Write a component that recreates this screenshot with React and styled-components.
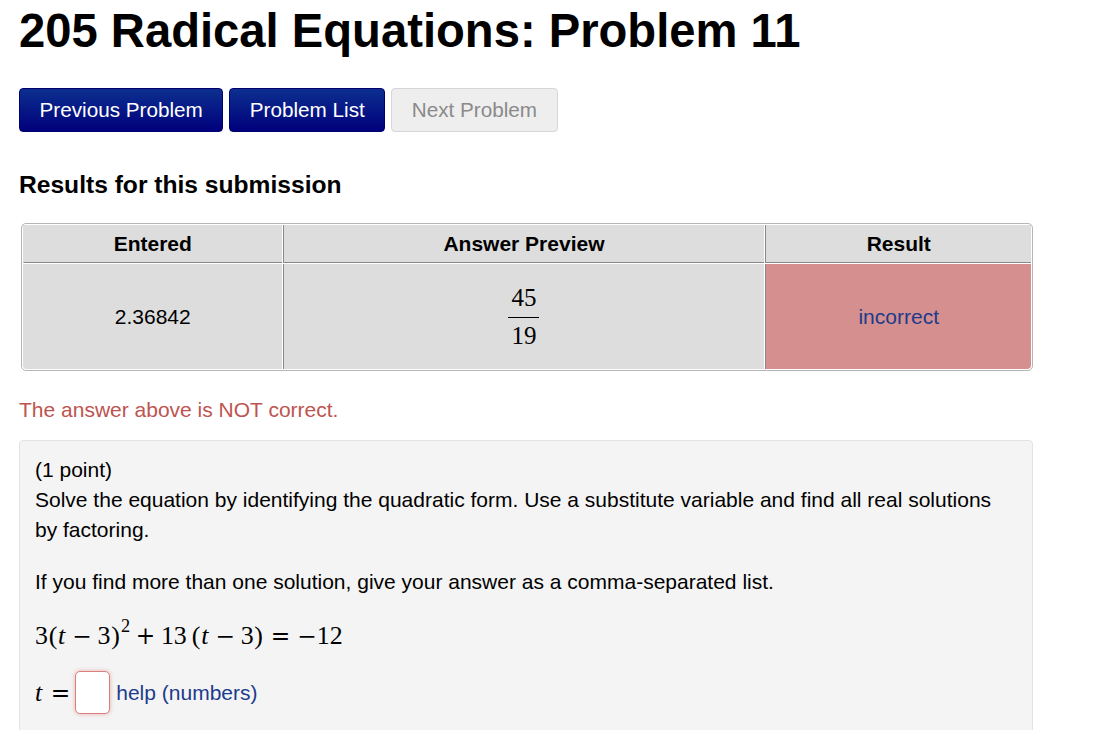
import styled, { createGlobalStyle } from "styled-components";

const GlobalStyle = createGlobalStyle`
  body {
    margin: 0;
    background: #fff;
    font-family: "Liberation Sans", Arial, sans-serif;
    color: #000;
  }
`;

const Page = styled.div`
  padding: 0 88px 0 19px;
`;

const Heading = styled.h1`
  margin: 0;
  padding-top: 3px;
  font-size: 47.2px;
  line-height: 56px;
  font-weight: bold;
`;

const NavBar = styled.div`
  display: flex;
  gap: 6px;
  margin-top: 29px;
`;

const NavButton = styled.button`
  height: 44px;
  padding: 0 19.5px;
  font-family: "Liberation Sans", Arial, sans-serif;
  font-size: 20.7px;
  border-radius: 4px;
  border: 1px solid ${(p) => (p.$disabled ? "#d6d6d6" : "#00006e")};
  color: ${(p) => (p.$disabled ? "#8a8a8a" : "#fff")};
  background: ${(p) =>
    p.$disabled ? "#eeeeee" : "linear-gradient(#0c2f8f, #00007c)"};
  cursor: ${(p) => (p.$disabled ? "default" : "pointer")};
`;

const SubHeading = styled.h2`
  margin: 38px 0 0;
  font-size: 24.6px;
  line-height: 30px;
  font-weight: bold;
`;

const ResultsTable = styled.table`
  margin: 23px 0 0 2px;
  width: 1012px;
  border: 1px solid #b5b5b5;
  border-radius: 5px;
  border-spacing: 1px;
  background: #fff;
  font-size: 21px;
`;

const HeadCell = styled.th`
  background: #dddddd;
  height: 37px;
  padding: 0;
  font-weight: bold;
  border-left: 1px solid ${(p) => (p.$first ? "#dddddd" : "#888")};
  border-bottom: 1px solid #888;
  width: ${(p) => p.$w}px;
`;

const BodyCell = styled.td`
  height: 105px;
  padding: 0;
  text-align: center;
  border-left: 1px solid ${(p) => (p.$first ? "#dddddd" : "#888")};
  background: ${(p) => (p.$bad ? "#d48f8e" : "#dddddd")};
  color: ${(p) => (p.$bad ? "#1d3b8c" : "#000")};
  border-bottom-right-radius: ${(p) => (p.$bad ? "4px" : "0")};
  border-bottom-left-radius: ${(p) => (p.$first ? "4px" : "0")};
`;

const Fraction = styled.span`
  display: inline-flex;
  flex-direction: column;
  align-items: center;
  font-family: "Liberation Serif", "DejaVu Serif", serif;
  font-size: 25px;
  line-height: 26px;
`;

const Numer = styled.span`
  padding: 1px 3px 6px;
  border-bottom: 1px solid #000;
`;

const Denom = styled.span`
  padding: 5px 3px 0;
`;

const ErrorText = styled.p`
  margin: 24px 0 0;
  color: #bd5450;
  font-size: 21px;
  line-height: 30px;
`;

const ProblemBox = styled.div`
  margin-top: 15px;
  width: 1014px;
  box-sizing: border-box;
  min-height: 320px;
  padding: 14px 22px 14px 15px;
  background: #f4f4f4;
  border: 1px solid #e3e3e3;
  border-radius: 4px;
  font-size: 21px;
  line-height: 30px;
`;

const Para = styled.p`
  margin: ${(p) => p.$top || 0}px 0 0;
`;

const MathLine = styled.div`
  margin-top: ${(p) => p.$top}px;
  display: flex;
  align-items: center;
  font-family: "Liberation Serif", "DejaVu Serif", serif;
  font-size: 25.9px;
  line-height: 30px;
  white-space: pre;
`;

const Var = styled.i`
  font-style: italic;
  padding-right: 0.06em;
`;

const Op = styled.span`
  font-family: "DejaVu Serif", serif;
  font-size: 0.9em;
  margin: 0 ${(p) => (p.$rel ? "0.3em" : "0.24em")};
  margin-right: ${(p) => (p.$tight ? "0" : undefined)};
  margin-left: ${(p) => (p.$neg ? "0" : undefined)};
`;

const Paren = styled.span`
  padding: 0 0.028em;
`;

const Sup = styled.span`
  font-size: 0.707em;
  position: relative;
  top: -0.55em;
  padding-left: 0.03em;
`;

const Thin = styled.span`
  display: inline-block;
  width: 0.167em;
`;

const AnswerInput = styled.input`
  width: 35px;
  height: 43px;
  box-sizing: border-box;
  margin: 0 6px 0 5px;
  padding: 0;
  border: 1px solid #d9807e;
  border-radius: 5px;
  background: #fff;
  box-shadow: 0 0 4px rgba(210, 90, 90, 0.45);
  outline: none;
`;

const HelpLink = styled.a`
  font-family: "Liberation Sans", Arial, sans-serif;
  font-size: 21px;
  color: #1d3b8c;
  text-decoration: none;
`;

export default function App() {
  return (
    <Page>
      <GlobalStyle />
      <Heading>205 Radical Equations: Problem 11</Heading>
      <NavBar>
        <NavButton>Previous Problem</NavButton>
        <NavButton>Problem List</NavButton>
        <NavButton $disabled>Next Problem</NavButton>
      </NavBar>
      <SubHeading>Results for this submission</SubHeading>
      <ResultsTable>
        <thead>
          <tr>
            <HeadCell $first $w={257}>Entered</HeadCell>
            <HeadCell $w={480}>Answer Preview</HeadCell>
            <HeadCell $w={264}>Result</HeadCell>
          </tr>
        </thead>
        <tbody>
          <tr>
            <BodyCell $first>2.36842</BodyCell>
            <BodyCell>
              <Fraction>
                <Numer>45</Numer>
                <Denom>19</Denom>
              </Fraction>
            </BodyCell>
            <BodyCell $bad>incorrect</BodyCell>
          </tr>
        </tbody>
      </ResultsTable>
      <ErrorText>The answer above is NOT correct.</ErrorText>
      <ProblemBox>
        <Para>(1 point)</Para>
        <Para>
          Solve the equation by identifying the quadratic form. Use a substitute
          variable and find all real solutions by factoring.
        </Para>
        <Para $top={22}>
          If you find more than one solution, give your answer as a
          comma-separated list.
        </Para>
        <MathLine $top={24}>
          3<Paren>(</Paren>
          <Var>t</Var>
          <Op>−</Op>3<Paren>)</Paren>
          <Sup>2</Sup>
          <Op>+</Op>13<Thin />
          <Paren>(</Paren>
          <Var>t</Var>
          <Op>−</Op>3<Paren>)</Paren>
          <Op $rel>=</Op>
          <Op $neg $tight>−</Op>12
        </MathLine>
        <MathLine $top={20}>
          <Var>t</Var>
          <Op $rel $tight>=</Op>
          <AnswerInput type="text" />
          <HelpLink href="#">help (numbers)</HelpLink>
        </MathLine>
      </ProblemBox>
    </Page>
  );
}
